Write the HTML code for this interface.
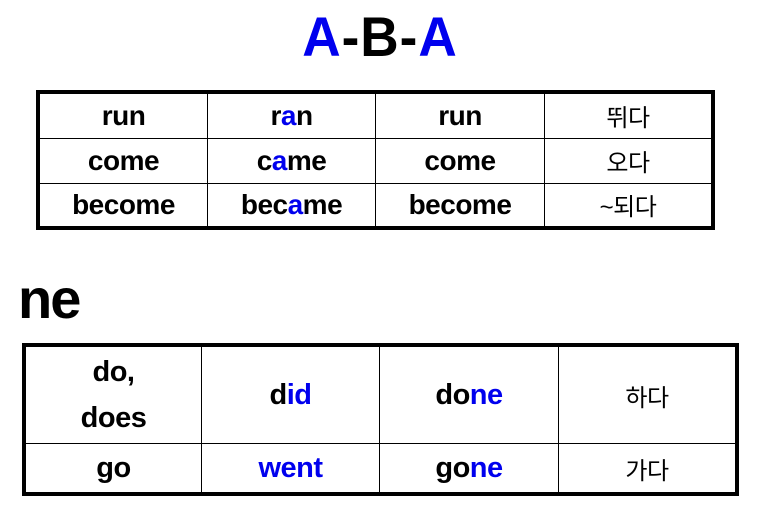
<!DOCTYPE html>
<html><head><style>
body{margin:0;width:760px;height:516px;background:#fff;position:relative;overflow:hidden;font-family:"Liberation Sans","Noto Sans CJK KR",sans-serif}
.t{position:absolute;font-weight:bold;font-size:56px;top:4px;left:0;width:760px;text-align:center;letter-spacing:1px;transform:scaleX(0.95)}
.b{color:#0000ee}
table{position:absolute;border-collapse:collapse;border:4px solid #000}
td{border:1px solid #000;text-align:center;font-weight:bold;font-size:28px;padding:0;letter-spacing:-0.5px}
td.k{font-weight:normal;font-size:24px}
</style></head><body>
<div class="t"><span class="b">A</span>-B-<span class="b">A</span></div>
<table style="left:36px;top:90px;width:679px;height:140px">
<tr style="height:46px"><td style="width:167px">run</td><td style="width:167px">r<span class="b">a</span>n</td><td style="width:168px">run</td><td class="k">뛰다</td></tr>
<tr style="height:45px"><td>come</td><td>c<span class="b">a</span>me</td><td>come</td><td class="k">오다</td></tr>
<tr style="height:45px"><td>become</td><td>bec<span class="b">a</span>me</td><td>become</td><td class="k">~되다</td></tr>
</table>
<div style="position:absolute;left:18px;top:266px;font-weight:bold;font-size:56px;letter-spacing:-2px">ne</div>
<table style="left:22px;top:343px;width:717px;height:153px">
<tr style="height:96px"><td style="width:175px;line-height:46px;font-size:29px">do,<br>does</td><td style="width:177px;font-size:29px">d<span class="b">id</span></td><td style="width:178px;font-size:29px">do<span class="b">ne</span></td><td class="k">하다</td></tr>
<tr style="height:49px"><td style="font-size:29px">go</td><td class="b" style="font-size:29px">went</td><td style="font-size:29px">go<span class="b">ne</span></td><td class="k">가다</td></tr>
</table>
</body></html>
